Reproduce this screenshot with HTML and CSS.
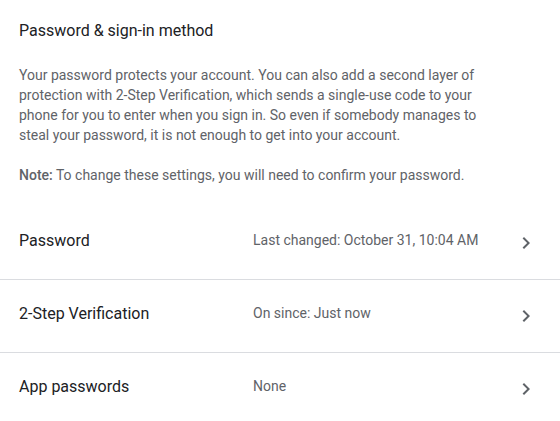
FILE: index.html
```html
<!DOCTYPE html>
<html>
<head>
<meta charset="utf-8">
<link rel="stylesheet" href="styles.css">
</head>
<body>
<div class="page">
  <header class="intro">
    <h1 class="title">Password &amp; sign-in method</h1>
    <p class="desc">Your password protects your account. You can also add a second layer of protection with 2-Step Verification, which sends a single-use code to your phone for you to enter when you sign in. So even if somebody manages to steal your password, it is not enough to get into your account.</p>
    <p class="desc"><b>Note:</b> To change these settings, you will need to confirm your password.</p>
  </header>
  <div class="rows">
    <div class="row">
      <span class="label">Password</span>
      <span class="value">Last changed: October 31, 10:04 AM</span>
      <svg class="chev" width="24" height="24" viewBox="0 0 24 24"><path d="M8.59 16.59L13.17 12 8.59 7.41 10 6l6 6-6 6z" fill="#5f6368"/></svg>
    </div>
    <div class="row">
      <span class="label">2-Step Verification</span>
      <span class="value">On since: Just now</span>
      <svg class="chev" width="24" height="24" viewBox="0 0 24 24"><path d="M8.59 16.59L13.17 12 8.59 7.41 10 6l6 6-6 6z" fill="#5f6368"/></svg>
    </div>
    <div class="row">
      <span class="label">App passwords</span>
      <span class="value">None</span>
      <svg class="chev" width="24" height="24" viewBox="0 0 24 24"><path d="M8.59 16.59L13.17 12 8.59 7.41 10 6l6 6-6 6z" fill="#5f6368"/></svg>
    </div>
  </div>
</div>
</body>
</html>
```
FILE: styles.css
```css
html, body {
  margin: 0;
  padding: 0;
  background: #fff;
}
body {
  font-family: Roboto, "Liberation Sans", Arial, sans-serif;
  color: #202124;
}
.intro {
  padding: 19px 19px 0 19px;
}
.title {
  margin: 0;
  font-size: 16px;
  font-weight: 400;
  line-height: 24px;
  color: #202124;
}
.desc {
  margin: 22px 0 0 0;
  max-width: 462px;
  font-size: 14px;
  line-height: 20px;
  color: #5f6368;
}
.desc + .desc {
  margin-top: 20px;
}
.desc b {
  font-weight: 500;
  color: #5f6368;
}
.rows {
  margin-top: 22px;
}
.row {
  display: flex;
  align-items: center;
  height: 72px;
  padding: 0 0 2px 19px;
  box-sizing: border-box;
}
.row + .row {
  border-top: 1px solid #dadce0;
  height: 73px;
}
.label {
  width: 234px;
  padding-bottom: 4px;
  font-size: 16px;
  color: #202124;
}
.value {
  flex: 1;
  padding-bottom: 4px;
  font-size: 14px;
  color: #5f6368;
}
.chev {
  margin: 2px 22px 0 0;
}
```
